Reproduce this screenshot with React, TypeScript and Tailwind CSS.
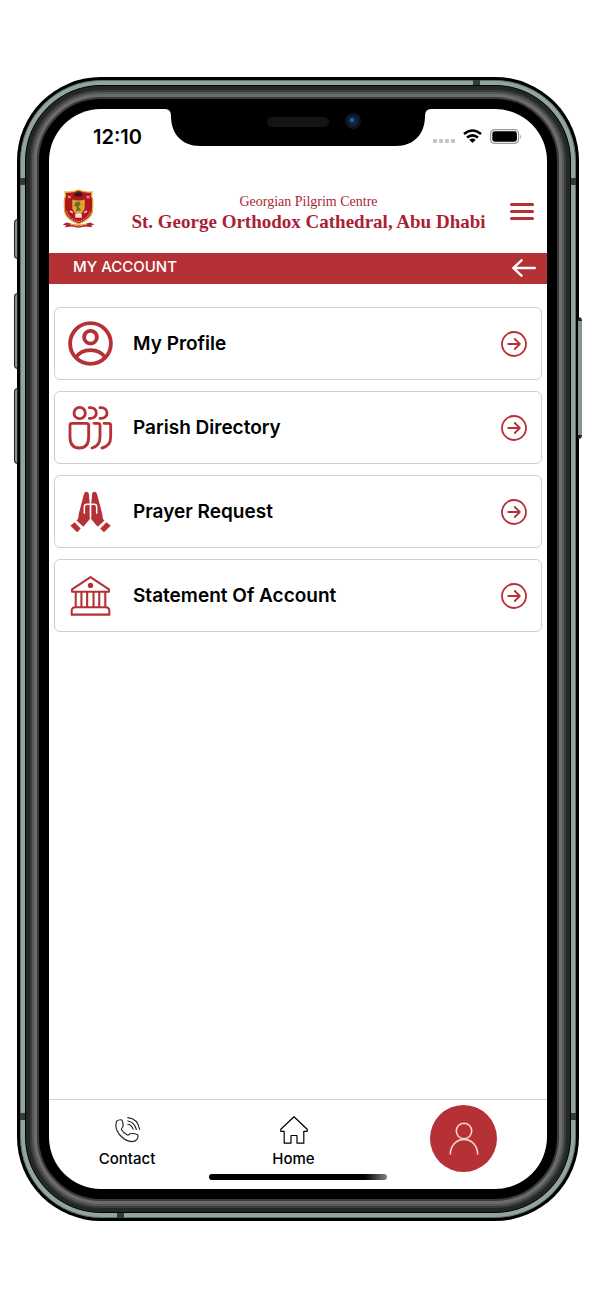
import React from 'react';

type IconProps = { className?: string };

const ProfileIcon: React.FC<IconProps> = ({ className }) => (
  <svg viewBox="0 0 45 45" className={className} fill="none" stroke="currentColor" strokeWidth="3.8" aria-hidden="true">
    <circle cx="22.5" cy="22.5" r="20.4" />
    <circle cx="22.5" cy="16.2" r="6.4" />
    <path d="M7.5 37C14 26.500 31 26.500 37.500 37" />
  </svg>
);

const DirectoryIcon: React.FC<IconProps> = ({ className }) => (
  <svg viewBox="0 0 135 135" className={className} fill="none" stroke="currentColor" strokeWidth="8.5" strokeLinecap="round" aria-hidden="true">
    <circle cx="35" cy="24" r="17" />
    <path d="M64 8C92 5 92 43 64 40M96 8C124 5 124 43 96 40" />
    <path d="M12 55h44q6 0 6 6v35q0 33-28 33T6 96V61q0-6 6-6z" />
    <path d="M78 55h12q6 0 6 6v35q0 27-24 33M108 55h14q6 0 6 6v35q0 27-26 33" />
  </svg>
);

const PrayerIcon: React.FC<IconProps> = ({ className }) => (
  <svg viewBox="0 0 126 126" className={className} aria-hidden="true">
    <g fill="currentColor">
      <path d="M43 9Q45 2 51 2Q58 2 58 10L61 42V86L41 110L20 91Q27 86 26 76L28 66Z" />
      <path d="M83 9Q81 2 75 2Q68 2 68 10L65 42V86L85 110L106 91Q99 86 100 76L98 66Z" />
      <path d="M1 107L14 96L33 115L22 127Z" />
      <path d="M125 107L112 96L93 115L104 127Z" />
    </g>
    <path d="M44 68V49Q44 41 52 41H74Q82 41 82 49V68M63 41V78" fill="none" stroke="#fff" strokeWidth="4.5" strokeLinecap="round" />
  </svg>
);

const BankIcon: React.FC<IconProps> = ({ className }) => (
  <svg viewBox="0 0 122 122" className={className} fill="none" stroke="currentColor" strokeWidth="6.2" strokeLinejoin="round" aria-hidden="true">
    <path d="M6 50V43L61 6l55 37v7z" />
    <circle cx="61" cy="31" r="8" fill="currentColor" stroke="none" />
    <path d="M17 50V95M34 50V95M51 50V95M70 50V95M87 50V95M105 50V95" />
    <path d="M5 118v-11q0-11 11-11h90q11 0 11 11v11z" />
  </svg>
);

const GoIcon: React.FC<IconProps> = ({ className }) => (
  <svg viewBox="0 0 26 26" className={className} fill="none" stroke="currentColor" strokeWidth="1.8" strokeLinecap="round" strokeLinejoin="round" aria-hidden="true">
    <circle cx="13" cy="13" r="12" />
    <path d="M7.2 13H18.800M13.800 8l5 5-5 5" />
  </svg>
);

const PhoneIcon: React.FC<IconProps> = ({ className }) => (
  <svg viewBox="0 0 82 82" className={className} fill="none" stroke="currentColor" strokeWidth="3.4" strokeLinecap="round" strokeLinejoin="round" aria-hidden="true">
    <path d="M8 16Q15 10 24 12Q29 24 27 33Q21 38 23 42Q29 53 41 58Q45 59 48 54Q58 51 72 57Q75 63 69 72Q64 78 55 78Q36 77 20 60Q0 38 8 16Z" />
    <path d="M42 5Q72 8 78 41M42 15Q62 18 68 41M42 25Q54 27 58 40" />
  </svg>
);

const HomeIcon: React.FC<IconProps> = ({ className }) => (
  <svg viewBox="0 0 28 28" className={className} fill="none" stroke="currentColor" strokeWidth="1.2" strokeLinejoin="round" aria-hidden="true">
    <path d="M14 .8L.8 13.300V15.300H4.200V27.200H11V19.500H17V27.200H23.800V15.300H27.200V13.300Z" />
  </svg>
);

const PersonIcon: React.FC<IconProps> = ({ className }) => (
  <svg viewBox="0 0 30 34" className={className} fill="none" stroke="currentColor" strokeWidth="1.6" strokeLinecap="round" aria-hidden="true">
    <circle cx="15" cy="9" r="7.7" />
    <path d="M1.300 32C2.500 12.500 27.500 12.500 28.700 32" />
  </svg>
);

const Crest: React.FC<IconProps> = ({ className }) => (
  <svg viewBox="0 0 100 122" className={className} aria-hidden="true">
    <path d="M2 108l12-6 22 6 14 1 14-1 22-6 12 6-10 3 5 6-22-3-21 4-21-4-22 3 6-6z" fill="#b3202c" />
    <path d="M24 107l26 6 26-6" fill="none" stroke="#e6b93c" strokeWidth="3" />
    <path d="M50 3Q30 12 9 9Q12 22 7 32Q6 50 8 70Q14 94 50 106Q86 94 92 70Q94 50 93 32Q88 22 91 9Q70 12 50 3Z" fill="#b3141f" stroke="#dfae35" strokeWidth="4" />
    <path d="M37 18l6-7h14l6 7-4 5H41z" fill="#2b1a1c" />
    <path d="M31 32q19 6 38 0v27q-4 14-19 20-15-6-19-20z" fill="#d8a930" />
    <path d="M40 41l12-3 5 8-7 7 8 11-16 5 3-13-8-5z" fill="#6f6a2c" />
    <path d="M17 21l10 7m0-8l-9 9M74 21l10 7m0-8l-9 9" stroke="#e9b9a8" strokeWidth="3" />
    <path d="M14 68q8 24 36 31 28-7 36-31" fill="none" stroke="#eec6b8" strokeWidth="3" strokeDasharray="4 3" />
    <path d="M40 75h20v13H40z" fill="#f6dcd2" />
    <path d="M24 67l9 6M76 67l-9 6" stroke="#f3c9bb" strokeWidth="5" />
  </svg>
);

const MENU_ITEMS = [
  { label: 'My Profile', icon: <ProfileIcon className="size-[45px]" /> },
  { label: 'Parish Directory', icon: <DirectoryIcon className="size-[45px]" /> },
  { label: 'Prayer Request', icon: <PrayerIcon className="size-[41px]" /> },
  { label: 'Statement Of Account', icon: <BankIcon className="size-[41px]" /> },
];

const Notch = () => (
  <div className="absolute inset-x-0 top-0 flex justify-center">
    <svg viewBox="0 0 266 37" className="w-[266px] h-[37px]" aria-hidden="true">
      <path d="M0 0Q6 0 6 7C6 25 17 37 35 37H231C249 37 260 25 260 7Q260 0 266 0Z" fill="#000" />
      <rect x="102" y="8" width="62" height="10" rx="5" fill="#141414" />
      <circle cx="188" cy="12" r="8" fill="#11151a" />
      <circle cx="188" cy="12" r="5" fill="#0c2648" />
      <circle cx="187" cy="11" r="2" fill="#2a62b0" />
    </svg>
  </div>
);

const StatusBar = () => (
  <div className="relative flex h-14 shrink-0 items-center justify-between pl-11 pr-[25px]">
    <Notch />
    <span className="text-xl font-semibold">12:10</span>
    <div className="flex items-center gap-2 pb-0.5">
      <div className="flex gap-0.5 pt-2.5">
        {[0, 1, 2, 3].map(i => <span key={i} className="size-1 rounded-[1px] bg-[#c4c4c4]" />)}
      </div>
      <svg viewBox="0 0 19 14" className="h-[14px] w-[19px]" fill="none" stroke="#000" strokeWidth="2.6" aria-hidden="true">
        <path d="M1 5Q9.500-2 18 5M4 8.600Q9.500 4 15 8.600" />
        <path d="M9.500 14L6.300 10.800Q9.500 8.400 12.700 10.800Z" fill="#000" stroke="none" />
      </svg>
      <svg viewBox="0 0 32 15" className="h-[15px] w-8" aria-hidden="true">
        <rect x=".6" y=".6" width="28" height="13.8" rx="4" fill="none" stroke="#9b9b9b" strokeWidth="1.2" />
        <rect x="2.3" y="2.3" width="24.6" height="10.4" rx="2.4" fill="#000" />
        <path d="M30 5q1.800 2.500 0 5z" fill="#9b9b9b" />
      </svg>
    </div>
  </div>
);

const Header = () => (
  <header className="flex h-[88px] shrink-0 items-center justify-between px-[13px]">
    <Crest className="h-10 w-[33px] shrink-0" />
    <div className="flex-1 pl-3 pt-2 text-center font-['Liberation_Serif',serif] text-[#ab1f35] whitespace-nowrap">
      <p className="text-sm leading-[18px]">Georgian Pilgrim Centre</p>
      <h1 className="text-[19px] font-bold leading-[22px]">St. George Orthodox Cathedral, Abu Dhabi</h1>
    </div>
    <button type="button" aria-label="Menu" className="flex w-6 flex-col gap-1 pt-1">
      <span className="h-[3px] rounded-full bg-[#b63136]" />
      <span className="h-[3px] rounded-full bg-[#b63136]" />
      <span className="h-[3px] rounded-full bg-[#b63136]" />
    </button>
  </header>
);

const BottomNav = () => (
  <nav className="relative flex h-[90px] shrink-0 items-start justify-between border-t border-[#cfcfcf] pl-12 pr-[50px] text-[15px] font-medium leading-5">
    <a href="#contact" className="flex w-[60px] flex-col items-center gap-1.5 pt-4">
      <PhoneIcon className="size-[27px] text-[#222]" />
      <span>Contact</span>
    </a>
    <a href="#home" className="flex w-[48px] flex-col items-center gap-[5px] pt-4">
      <HomeIcon className="size-7" />
      <span>Home</span>
    </a>
    <a href="#account" aria-label="My account" className="mt-[5px] flex size-[67px] items-center justify-center rounded-full bg-[#b63136] text-[#f6d5cd]">
      <PersonIcon className="h-[34px] w-[30px]" />
    </a>
    <div className="absolute inset-x-0 bottom-[9px] flex justify-center">
      <span className="h-1.5 w-[178px] rounded-full bg-linear-to-r from-black from-85% to-[#888]" />
    </div>
  </nav>
);

// Side keys and antenna bands of the handset
const HandsetDetails = () => (
  <>
    <span className="absolute -left-[3px] top-[142px] h-10 w-1 rounded-l-sm border border-[#1c2422] bg-[#839690]" />
    <span className="absolute -left-[3px] top-[216px] h-[76px] w-1 rounded-l-sm border border-[#1c2422] bg-[#839690]" />
    <span className="absolute -left-[3px] top-[311px] h-[76px] w-1 rounded-l-sm border border-[#1c2422] bg-[#839690]" />
    <span className="absolute -right-[3px] top-[240px] h-[122px] w-1 rounded-r-sm border-y-4 border-[#1c2422] bg-[#839690]" />
    <span className="absolute left-[3px] top-[101px] h-[7px] w-[5px] bg-[#2d3d3a]" />
    <span className="absolute right-[3px] top-[101px] h-[7px] w-[5px] bg-[#2d3d3a]" />
    <span className="absolute bottom-[101px] left-[3px] h-[7px] w-[5px] bg-[#2d3d3a]" />
    <span className="absolute bottom-[101px] right-[3px] h-[7px] w-[5px] bg-[#2d3d3a]" />
    <span className="absolute right-[99px] top-[3px] h-[5px] w-[7px] bg-[#2d3d3a]" />
    <span className="absolute bottom-[3px] left-[100px] h-[5px] w-[7px] bg-[#2d3d3a]" />
  </>
);

const App: React.FC = () => {
  return (
    <div className="flex min-h-screen bg-white pb-[78px] pl-[17px] pr-[21px] pt-[77px] font-['Inter',sans-serif] text-black">
      <div className="relative flex flex-1 rounded-[84px] bg-black p-[3px]">
        <div className="flex flex-1 rounded-[81px] border border-[#5d716c] bg-[#91a49f] p-1">
          <div className="flex flex-1 rounded-[76px] border border-black bg-[#252726] p-1">
            <div className="flex flex-1 rounded-[71px] border-2 border-[#3c3e3d] bg-[#565857] p-0.5">
              <div className="flex flex-1 rounded-[67px] bg-[#6c6c6c] p-[3px]">
                <div className="flex flex-1 rounded-[64px] border-2 border-[#3a3a3a] bg-black p-[10px]">
                  <div className="flex min-w-0 flex-1 flex-col overflow-hidden rounded-[52px] bg-white">
                    <StatusBar />
                    <Header />
                    <div className="flex h-[31px] shrink-0 items-center justify-between bg-[#b63136] pb-0.5 pl-6 pr-[11px] text-white">
                      <h2 className="text-[15px] font-medium">MY ACCOUNT</h2>
                      <button type="button" aria-label="Back">
                        <svg viewBox="0 0 24 18" className="h-[18px] w-6" fill="none" stroke="currentColor" strokeWidth="2.4" strokeLinecap="round" strokeLinejoin="round" aria-hidden="true">
                          <path d="M22.800 9H1.300M9.500 1.300L1.300 9l8.200 7.700" />
                        </svg>
                      </button>
                    </div>
                    <main className="flex flex-1 flex-col gap-[11px] px-[5px] pt-[23px]">
                      {MENU_ITEMS.map(item => (
                        <button
                          key={item.label}
                          type="button"
                          className="flex h-[73px] items-center rounded-md border border-[#cfcfcf] pl-[7px] pr-3.5 text-left text-[#b63136]"
                        >
                          <span className="flex w-14 justify-center">{item.icon}</span>
                          <span className="flex-1 pl-[15px] pt-px text-[19px] font-semibold text-black">{item.label}</span>
                          <GoIcon className="size-[26px]" />
                        </button>
                      ))}
                    </main>
                    <BottomNav />
                  </div>
                </div>
              </div>
            </div>
          </div>
        </div>
        <HandsetDetails />
      </div>
    </div>
  );
};

export default App;
